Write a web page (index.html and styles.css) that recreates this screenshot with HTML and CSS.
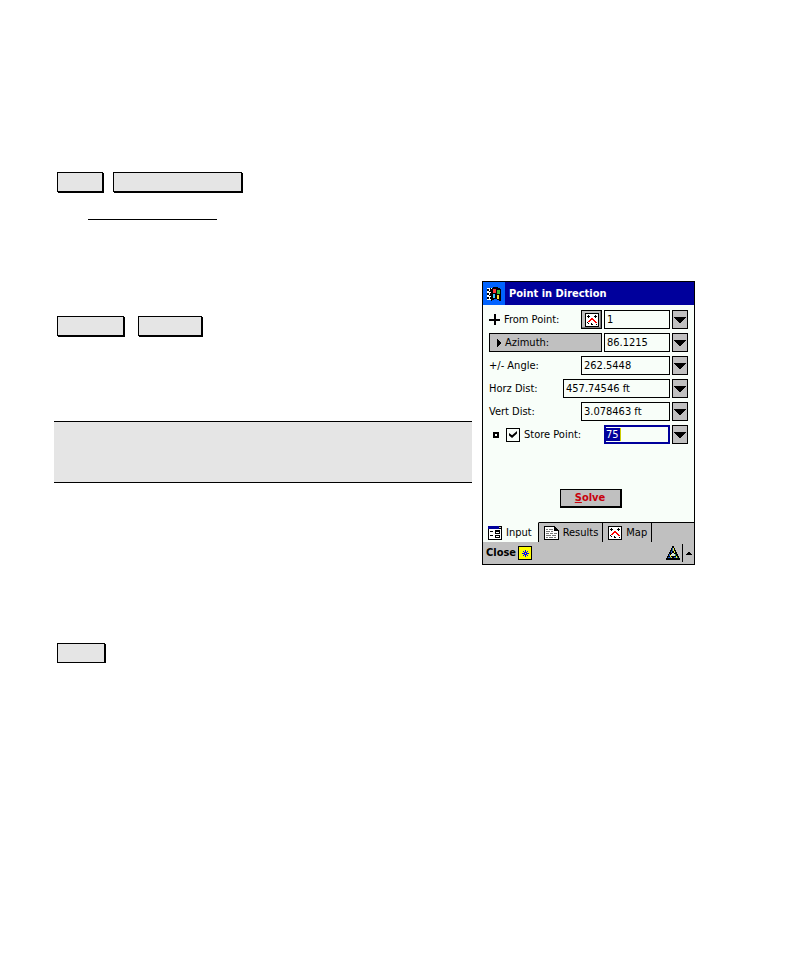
FILE: index.html
```html
<!DOCTYPE html>
<html lang="en">
<head>
<meta charset="utf-8">
<title>Point in Direction</title>
<link rel="stylesheet" href="styles.css">
</head>
<body>
<svg class="defs" width="0" height="0">
  <symbol id="map" viewBox="0 0 14 14">
    <path fill="#000" d="M0 0h14v14H0z"/><path fill="#fff" d="M1 1h12v12H1z"/>
    <path fill="#000" d="M2 3h3v1H2zM3 2h1v3H3zM9 3h3v1H9zM10 2h1v3h-1zM2 9h1v1H2zM3 10h1v1H3zM6 11h2v1H6zM11 11h1v1h-1zM6 10h1v1H6z"/>
    <path fill="#f00" d="M6 5h2v1H6zM5 6h4v1H5zM4 7h2v1H4zM8 7h2v1H8zM3 8h2v1H3zM9 8h2v1H9zM10 9h2v1h-2z"/>
  </symbol>
  <symbol id="down" viewBox="0 0 12 6"><path d="M0 0h12v1H0zM1 1h10v1H1zM2 2h8v1H2zM3 3h6v1H3zM4 4h4v1H4zM5 5h2v1H5z"/></symbol>
</svg>
<main class="page">
  <div class="notes">
    <div class="keys"><span class="key key-s"></span><span class="key key-xl"></span></div>
    <hr class="rule">
    <div class="keys keys-mid"><span class="key key-l"></span><span class="key key-m"></span></div>
    <div class="note"></div>
    <div class="keys"><span class="key key-n"></span></div>
  </div>

  <section class="device">
    <header class="title">
      <span class="start">
        <svg width="16" height="16" viewBox="0 0 16 16">
          <path fill="#fff" d="M1 2h5v12H1z"/>
          <path d="M7 1h5v1h2v1h1v12h-2v-1h-2v-1H8v1H6v1H5V3h1V2h1z"/>
          <path d="M1 3h2v2H1zM1 7h2v2H1zM1 11h2v2H1zM4 2h1v3H4zM3 5h2v1H3zM4 7h1v2H4zM3 9h2v1H3zM4 11h1v2H4z"/>
          <path fill="#f33" d="M7 3h3v4H7z"/><path fill="#3b3" d="M11 4h3v4h-3z"/>
          <path fill="#3cf" d="M7 8h2v4H7z"/><path fill="#fd3" d="M11 9h2v4h-2z"/>
        </svg>
      </span>
      <h1>Point in Direction</h1>
    </header>

    <form class="form">
      <div class="row">
        <svg class="plus" width="11" height="11" viewBox="0 0 11 11"><path d="M5 0h2v11H5zM0 5h11v2H0z"/></svg>
        <label for="from">From Point:</label>
        <button type="button" class="pick"><svg width="14" height="14"><use href="#map"/></svg></button>
        <input id="from" class="field" value="1">
        <button type="button" class="drop"><svg width="12" height="6"><use href="#down"/></svg></button>
      </div>
      <div class="row">
        <button type="button" class="azimuth" id="az"><svg width="4" height="8" viewBox="0 0 4 8"><path d="M0 0h1v1h1v1h1v1h1v2H3v1H2v1H1v1H0z"/></svg>Azimuth:</button>
        <input aria-labelledby="az" class="field" value="86.1215">
        <button type="button" class="drop"><svg width="12" height="6"><use href="#down"/></svg></button>
      </div>
      <div class="row">
        <label for="angle">+/- Angle:</label>
        <input id="angle" class="field field-m" value="262.5448">
        <button type="button" class="drop"><svg width="12" height="6"><use href="#down"/></svg></button>
      </div>
      <div class="row">
        <label for="horz">Horz Dist:</label>
        <input id="horz" class="field field-l" value="457.74546 ft">
        <button type="button" class="drop"><svg width="12" height="6"><use href="#down"/></svg></button>
      </div>
      <div class="row">
        <label for="vert">Vert Dist:</label>
        <input id="vert" class="field field-m" value="3.078463 ft">
        <button type="button" class="drop"><svg width="12" height="6"><use href="#down"/></svg></button>
      </div>
      <div class="row">
        <span class="dot"></span>
        <input type="checkbox" id="store" class="check" checked>
        <label for="store" id="store-label">Store Point:</label>
        <span class="field focused"><input aria-labelledby="store-label" class="selected" value="75"></span>
        <button type="button" class="drop"><svg width="12" height="6"><use href="#down"/></svg></button>
      </div>
      <button type="button" class="solve"><u>S</u>olve</button>
    </form>

    <nav class="tabs">
      <button type="button" class="tab active">
        <svg width="14" height="14" viewBox="0 0 14 14"><path d="M0 0h14v14H0z"/><path fill="#fff" d="M1 3h12v10H1z"/><path fill="#00009c" d="M0 0h11v3H0z"/><path fill="#ccc" d="M11 1h2v1h-2z"/><path d="M2 5h3v1H2zM2 9h3v1H2zM7 4h5v4H7zM7 9h5v3H7z"/><path fill="#fff" d="M8 6h3v1H8zM8 10h3v1H8z"/></svg>
        Input</button>
      <button type="button" class="tab">
        <svg width="15" height="14" viewBox="0 0 15 14"><path d="M0 0h11v1h1v1h1v1h1v1h1v10H0z"/><path fill="#fff" d="M1 1h9v4h4v8H1z"/><path fill="#777" d="M2 3h2v1H2zM5 3h4v1H5zM2 5h4v1H2zM7 5h2v1H7zM2 7h3v1H2zM6 7h3v1H6zM10 7h3v1h-3zM2 9h5v1H2zM8 9h4v1H8zM2 11h2v1H2zM5 11h4v1H5zM10 11h2v1h-2z"/><path d="M10 1h1v3h3v1h-4z"/></svg>
        Results</button>
      <button type="button" class="tab">
        <svg width="14" height="14"><use href="#map"/></svg>
        Map</button>
    </nav>

    <footer class="bar">
      <button type="button" class="close">Close</button>
      <button type="button" class="star"><svg width="7" height="7" viewBox="0 0 7 7"><path fill="#00f" d="M3 0h1v2H3zM3 5h1v2H3zM0 3h2v1H0zM5 3h2v1H5zM1 1h1v1H1zM5 1h1v1H5zM1 5h1v1H1zM5 5h1v1H5zM2 2h3v3H2z"/><path fill="#ff0" d="M3 3h1v1H3z"/></svg></button>
      <svg class="logo" width="14" height="14" viewBox="0 0 14 14"><path d="M6 0h2v2h1v2h1v2h1v2h1v2h1v2h1v2H0v-2h1v-2h1V8h1V6h1V4h1V2h1z"/><path fill="#2060d0" d="M6 2h1v3H6zM5 5h1v2H5zM3 8h1v2H3zM2 11h3v1H2zM8 11h2v1H8z"/><path fill="#ee3" d="M7 2h1v3H7zM8 5h1v2H8zM10 10h1v2h-1zM4 9h1v2H4zM5 11h1v1H5z"/><path fill="#1a9a60" d="M9 8h1v2H9zM11 11h1v1h-1z"/><path fill="#d8e0d8" d="M6 7h2v1h1v2H5V8h1z"/></svg>
      <button type="button" class="more"><svg width="6" height="3" viewBox="0 0 6 3"><path d="M2 0h2v1h1v1h1v1H0V2h1V1h1z"/></svg></button>
    </footer>
  </section>
</main>
</body>
</html>
```
FILE: styles.css
```css
* { box-sizing: border-box; }

body {
  margin: 0;
  background: #fff;
  color: #000;
  font: 11px/14px "DejaVu Sans Condensed", Tahoma, sans-serif;
}

svg { flex: none; shape-rendering: crispEdges; }
.defs { position: absolute; }

.page {
  display: grid;
  grid-template-columns: 1fr 213px;
  gap: 10px;
  align-items: start;
  padding: 172px 91px 0 54px;
}

.keys { display: flex; gap: 10px; padding-left: 3px; }
.keys-mid { gap: 14px; margin-top: 96px; }
.key {
  height: 20px;
  border: 1px solid #000;
  background: #e5e5e5;
  box-shadow: 1px 1px #000;
}
.key-s { width: 46px; }
.key-n { width: 48px; }
.key-m { width: 64px; }
.key-l { width: 67px; }
.key-xl { width: 129px; }

.rule {
  width: 129px;
  height: 1px;
  margin: 27px 0 0 34px;
  border: 0;
  background: #000;
}

.note {
  height: 62px;
  margin: 85px 0 160px;
  border: solid #000;
  border-width: 1px 0;
  background: #e5e5e5;
}

.device {
  margin-top: 109px;
  border: 1px solid #000;
  background: #f8fef9;
}

button, input { font: inherit; color: inherit; border-radius: 0; }
button { padding: 0; border: 0; background: none; }

.title {
  display: flex;
  align-items: center;
  height: 23px;
  background: #00009c;
  color: #fff;
}
.start {
  display: grid;
  place-items: center;
  width: 22px;
  height: 23px;
  background: #0063ff;
}
h1 { margin: 0 0 0 4px; font: inherit; font-weight: bold; }

.form {
  display: flex;
  flex-direction: column;
  gap: 4px;
  padding: 5px 6px 14px;
}
.row { display: flex; align-items: center; gap: 2px; height: 19px; }
.row label { flex: 1; white-space: nowrap; }
.plus { margin-right: 2px; }

.field {
  width: 66px;
  height: 19px;
  padding: 0 0 0 2px;
  border: 1px solid #000;
  background: #f8fef9;
}
.field-m { width: 89px; }
.field-l { width: 107px; }
.focused { padding: 1px 0 0; border: 2px solid #00009c; }
.selected {
  display: block;
  width: 15px;
  height: 13px;
  padding: 0;
  border: 0;
  border-right: 1px solid #cc0;
  background: #00009c;
  color: #fff;
}

.drop, .pick, .azimuth, .solve { border: 1px solid #000; background: #c0c0c0; }
.drop, .pick { display: grid; place-items: center; height: 19px; }
.drop { width: 16px; }
.pick { width: 21px; box-shadow: inset -1px -1px #777; }
.azimuth {
  display: flex;
  flex: 1;
  align-items: center;
  gap: 4px;
  height: 19px;
  padding-left: 7px;
}

.dot {
  width: 6px;
  height: 6px;
  margin: 0 5px 0 4px;
  border: 2px solid #000;
}
.check {
  appearance: none;
  display: grid;
  place-items: center;
  width: 14px;
  height: 14px;
  margin: 0 2px 0 0;
  border: 1px solid #000;
}
.check:checked::before {
  content: "";
  width: 8px;
  height: 7px;
  background: #000;
  clip-path: polygon(0 30%, 38% 60%, 100% 0, 100% 35%, 38% 100%, 0 65%);
}

.solve {
  align-self: center;
  width: 62px;
  height: 19px;
  margin: 41px 0 0 4px;
  border-right-width: 2px;
  border-bottom-width: 2px;
  color: #c8000c;
  font-weight: bold;
}

.tabs { display: flex; height: 20px; background: #c0c0c0; }
.tabs::after { content: ""; flex: 1; border-top: 1px solid #000; }
.tab {
  display: flex;
  align-items: center;
  gap: 4px;
  padding: 0 4px 0 5px;
  border: solid #000;
  border-width: 1px 1px 0 0;
}
.active { padding-right: 6px; border-top-color: #f8fef9; background: #f8fef9; }

.bar { display: flex; align-items: center; height: 22px; background: #c0c0c0; }
.close { margin: 0 2px 0 3px; font-weight: bold; }
.star {
  display: grid;
  place-items: center;
  width: 14px;
  height: 14px;
  border: 1px solid #000;
  background: #ff0;
}
.logo { margin: 0 2px 0 auto; }
.more {
  display: grid;
  place-items: center;
  width: 12px;
  height: 18px;
  border-left: 1px solid #000;
}
```
